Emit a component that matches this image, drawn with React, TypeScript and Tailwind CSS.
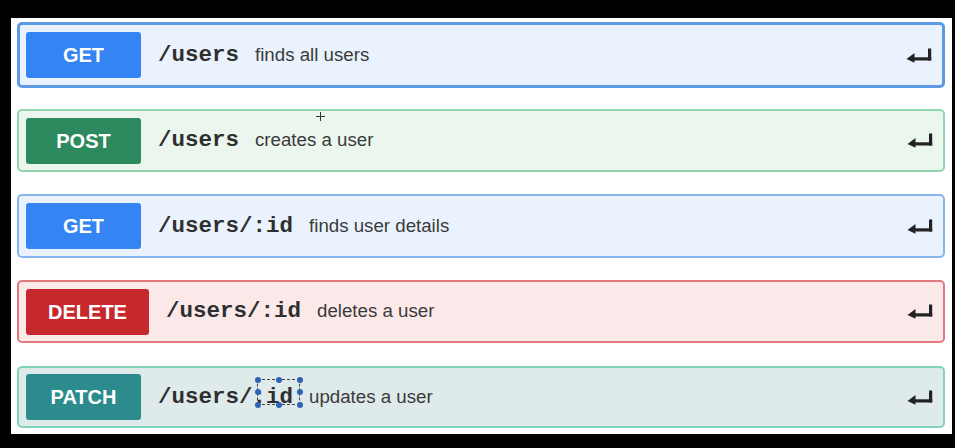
import React from "react";

type Row = {
  method: string;
  path: string;
  desc: string;
  badge: string;
  badgeW: string;
  card: string;
  mt: string;
  h: string;
};

const rows: Row[] = [
  {
    method: "GET",
    path: "/users",
    desc: "finds all users",
    badge: "bg-[#3584f4]",
    badgeW: "w-[115px]",
    card: "bg-[#eaf3fd] border-[3px] border-[#5c9ae6] pl-[6px]",
    mt: "mt-[4px]",
    h: "h-[66px]",
  },
  {
    method: "POST",
    path: "/users",
    desc: "creates a user",
    badge: "bg-[#2d8a5f]",
    badgeW: "w-[115px]",
    card: "bg-[#ebf6ef] border-2 border-[#94d6ab] pl-[7px]",
    mt: "mt-[21px]",
    h: "h-[63px]",
  },
  {
    method: "GET",
    path: "/users/:id",
    desc: "finds user details",
    badge: "bg-[#3584f4]",
    badgeW: "w-[115px]",
    card: "bg-[#eaf3fd] border-2 border-[#86b6ec] pl-[7px]",
    mt: "mt-[22px]",
    h: "h-[64px]",
  },
  {
    method: "DELETE",
    path: "/users/:id",
    desc: "deletes a user",
    badge: "bg-[#c6282d]",
    badgeW: "w-[123px]",
    card: "bg-[#fbe9ea] border-2 border-[#e0787d] pl-[7px]",
    mt: "mt-[22px]",
    h: "h-[63px]",
  },
  {
    method: "PATCH",
    path: "/users/:id",
    desc: "updates a user",
    badge: "bg-[#2b8b8d]",
    badgeW: "w-[115px]",
    card: "bg-[#dfeaea] border-2 border-[#80d4bd] pl-[7px]",
    mt: "mt-[23px]",
    h: "h-[62px]",
  },
];

function EnterIcon() {
  return (
    <svg width="26" height="15" viewBox="0 0 26 15" className="block">
      <rect x="22" y="0.5" width="3.2" height="12" fill="#222" />
      <rect x="7" y="9.3" width="18.2" height="3.2" fill="#222" />
      <path d="M0.5 10.9 L8.5 5 L8.5 14.8 Z" fill="#222" />
    </svg>
  );
}

function Handle({ cls }: { cls: string }) {
  return <div className={`absolute w-[6px] h-[6px] rounded-full bg-[#2e62b6] ${cls}`} />;
}

export default function App() {
  return (
    <div className="relative w-[955px] h-[448px] bg-black pt-[18px] pl-[11px]">
      <div className="w-[941px] h-[416px] bg-white pl-[6px] pr-[7px] flex flex-col">
        {rows.map((r, i) => (
          <div
            key={i}
            className={`${r.mt} ${r.h} ${r.card} w-[928px] shrink-0 rounded-[5px] flex items-center pr-[10px]`}
          >
            <div
              className={`${r.badge} ${r.badgeW} h-[46px] rounded-[3px] flex items-center justify-center text-white font-bold text-[20px] font-['Liberation_Sans',Arial,sans-serif]`}
            >
              {r.method}
            </div>
            <div className="ml-[17px] font-['Liberation_Mono','Courier_New',monospace] font-bold text-[22.5px] text-[#2f2f2f] leading-none">
              {r.path}
            </div>
            <div className="ml-[16px] font-['Liberation_Sans',Arial,sans-serif] text-[18.7px] text-[#3a3a3a] leading-none">
              {r.desc}
            </div>
            <div className="ml-auto">
              <EnterIcon />
            </div>
          </div>
        ))}
      </div>

      {/* cursor crosshair */}
      <div className="absolute left-[316px] top-[116px] w-[9px] h-px bg-[#333]" />
      <div className="absolute left-[320px] top-[112px] w-px h-[9px] bg-[#333]" />

      {/* selection box around :id */}
      <div className="absolute left-[257px] top-[379px] w-[43px] h-[26px] border border-dashed border-[#444]">
        <Handle cls="-left-[3.5px] -top-[3.5px]" />
        <Handle cls="left-[18px] -top-[3.5px]" />
        <Handle cls="-right-[3.5px] -top-[3.5px]" />
        <Handle cls="-left-[3.5px] top-[9px]" />
        <Handle cls="-right-[3.5px] top-[9px]" />
        <Handle cls="-left-[3.5px] -bottom-[3.5px]" />
        <Handle cls="left-[18px] -bottom-[3.5px]" />
        <Handle cls="-right-[3.5px] -bottom-[3.5px]" />
      </div>
    </div>
  );
}
